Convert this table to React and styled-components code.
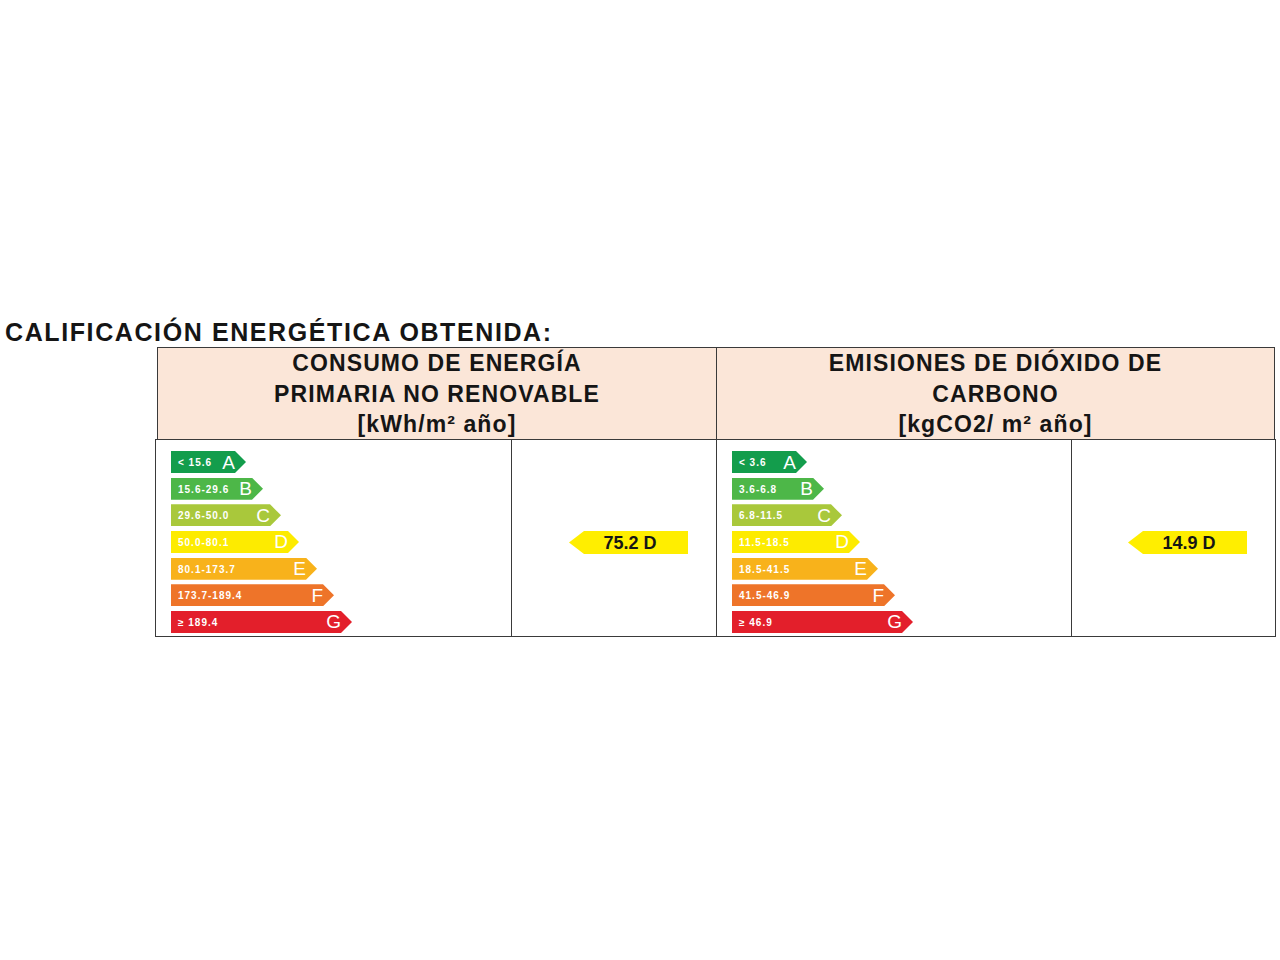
import React from "react";
import styled, { createGlobalStyle } from "styled-components";

const Global = createGlobalStyle`
  html, body { margin: 0; padding: 0; background: #ffffff; }
  body { font-family: "Liberation Sans", Arial, sans-serif; color: #1b1b1b; }
`;

const Page = styled.div`
  width: 1280px;
  height: 960px;
  padding-top: 317px;
  box-sizing: border-box;
`;

const Title = styled.h1`
  margin: 0 0 0 5px;
  font-size: 25px;
  line-height: 30px;
  font-weight: 700;
  letter-spacing: 1.6px;
  color: #151515;
`;

const Table = styled.div`
  margin-left: 155px;
  width: 1121px;
`;

const HeaderRow = styled.div`
  display: grid;
  grid-template-columns: 559px 1fr;
  width: 1118px;
  margin-left: 2px;
  border-top: 1px solid #3a3a3a;
  border-right: 1px solid #3a3a3a;
  box-sizing: border-box;
  background: #fbe6d8;
`;

const HeaderCell = styled.div`
  border-left: 1px solid #3a3a3a;
  text-align: center;
  font-size: 23px;
  line-height: 30.5px;
  font-weight: 700;
  letter-spacing: 1.1px;
  height: 91px;
  color: #151515;
`;

const BodyRow = styled.div`
  display: grid;
  grid-template-columns: 356px 205px 355px 204px;
  border: 1px solid #3a3a3a;
  border-left: none;
  height: 198px;
  box-sizing: border-box;
`;

const ChartCell = styled.div`
  border-left: 1px solid #3a3a3a;
  padding: 11px 0 0 15px;
  display: grid;
  grid-template-rows: repeat(7, 22px);
  row-gap: 4.67px;
  align-content: start;
`;

const ValueCell = styled(ChartCell)`
  padding: 11px 28px 0 0;
  justify-items: end;
`;

const Bar = styled.div`
  width: ${(p) => p.$w}px;
  height: 22px;
  background: ${(p) => p.$c};
  clip-path: polygon(0 0, calc(100% - 11px) 0, 100% 50%, calc(100% - 11px) 100%, 0 100%);
  display: flex;
  align-items: center;
  justify-content: space-between;
  padding: 1px 11px 0 7px;
  box-sizing: border-box;
  color: #ffffff;
`;

const Range = styled.span`
  font-size: 10px;
  font-weight: 700;
  white-space: nowrap;
  letter-spacing: 1px;
`;

const Letter = styled.span`
  font-size: 19px;
  font-weight: 400;
  line-height: 22px;
`;

const Marker = styled.div`
  grid-row: 4;
  width: 119px;
  height: 23px;
  background: #ffee00;
  clip-path: polygon(15px 0, 100% 0, 100% 100%, 15px 100%, 0 50%);
  display: flex;
  align-items: center;
  justify-content: center;
  padding: 2px 0 0 3px;
  box-sizing: border-box;
  font-size: 18px;
  font-weight: 700;
  color: #151515;
`;

const COLORS = ["#139d4c", "#4db748", "#a9c83b", "#fdeb00", "#f8b21b", "#ee7429", "#e31f2b"];
const LETTERS = ["A", "B", "C", "D", "E", "F", "G"];
const WIDTHS = [75, 92, 110, 128, 146, 163, 181];

const Scale = ({ ranges }) => (
  <ChartCell>
    {ranges.map((r, i) => (
      <Bar key={LETTERS[i]} $w={WIDTHS[i]} $c={COLORS[i]}>
        <Range>{r}</Range>
        <Letter>{LETTERS[i]}</Letter>
      </Bar>
    ))}
  </ChartCell>
);

export default function App() {
  return (
    <Page>
      <Global />
      <Title>CALIFICACIÓN ENERGÉTICA OBTENIDA:</Title>
      <Table>
        <HeaderRow>
          <HeaderCell>
            CONSUMO DE ENERGÍA
            <br />
            PRIMARIA NO RENOVABLE
            <br />
            [kWh/m² año]
          </HeaderCell>
          <HeaderCell>
            EMISIONES DE DIÓXIDO DE
            <br />
            CARBONO
            <br />
            [kgCO2/ m² año]
          </HeaderCell>
        </HeaderRow>
        <BodyRow>
          <Scale
            ranges={["< 15.6", "15.6-29.6", "29.6-50.0", "50.0-80.1", "80.1-173.7", "173.7-189.4", "≥ 189.4"]}
          />
          <ValueCell>
            <Marker>75.2 D</Marker>
          </ValueCell>
          <Scale ranges={["< 3.6", "3.6-6.8", "6.8-11.5", "11.5-18.5", "18.5-41.5", "41.5-46.9", "≥ 46.9"]} />
          <ValueCell>
            <Marker>14.9 D</Marker>
          </ValueCell>
        </BodyRow>
      </Table>
    </Page>
  );
}
